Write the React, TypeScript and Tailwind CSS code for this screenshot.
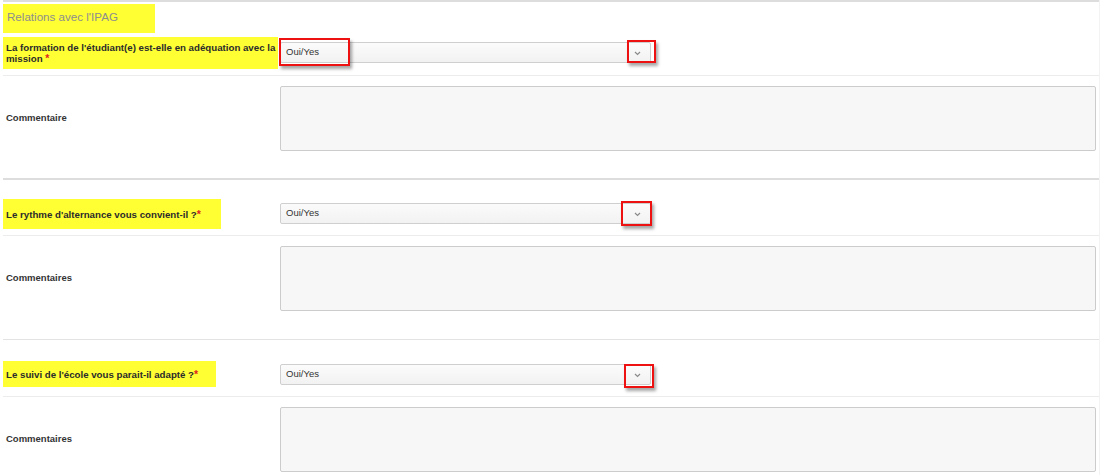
import React from 'react';

const font = { fontFamily: '"Liberation Sans", Arial, sans-serif' };

const RedBox = ({ className }: { className: string }) => (
  <div
    className={`absolute border-2 border-[#ee1111] shadow-[2px_3px_3px_rgba(0,0,0,0.35)] ${className}`}
  />
);

interface SelectProps {
  marks?: 'both' | 'chevron';
  chevronBox: string;
}

const FakeSelect = ({ marks = 'chevron', chevronBox }: SelectProps) => (
  <div className="relative w-[371px] h-[21px] border border-[#cfcfcf] rounded-[2px] bg-gradient-to-b from-[#fbfbfb] to-[#f2f2f2] flex items-center">
    <span className="pl-[5px] text-[9.5px] text-[#333]">Oui/Yes</span>
    <svg
      className="absolute right-[9px] top-[8px]"
      width="7"
      height="5"
      viewBox="0 0 7 5"
      fill="none"
    >
      <path d="M1 1l2.5 2.5L6 1" stroke="#8a8a8a" strokeWidth="1.2" />
    </svg>
    {marks === 'both' && <RedBox className="left-[-2px] top-[-5px] w-[71px] h-[28px]" />}
    <RedBox className={chevronBox} />
  </div>
);

const Question = ({
  children,
  boxClass,
}: {
  children: React.ReactNode;
  boxClass: string;
}) => (
  <div
    className={`bg-[#ffff33] text-[9.7px] font-bold text-[#2b2b2b] leading-[11px] pl-[3px] flex items-center ${boxClass}`}
  >
    <div>{children}</div>
  </div>
);

const Star = () => <span className="text-[#e02020] text-[10.5px]">*</span>;

const CommentRow = ({ label, h }: { label: string; h: string }) => (
  <div className="flex items-center mt-[10px]">
    <div className="w-[277px] pl-[3px] text-[9.5px] font-bold text-[#333]">{label}</div>
    <div className={`w-[816px] ${h} border border-[#cccccc] rounded-[2px] bg-[#f7f7f7]`} />
  </div>
);

export default function App() {
  return (
    <div className="bg-white w-[1110px] h-[475px] overflow-hidden" style={font}>
      <div className="ml-[3px] w-[1097px] border-r border-[#f3f3f3] h-full">
        <div className="h-[2px] bg-[#dddddd]" />

        {/* titre de section */}
        <div className="mt-[2px] w-[152px] h-[29px] bg-[#ffff33] pl-[4px] pt-[4px] text-[11.6px] text-[#8e8e8e]">
          Relations avec l'IPAG
        </div>

        {/* Q1 */}
        <div className="flex items-start mt-[4px]">
          <Question boxClass="w-[275px] h-[32px]">
            La formation de l'étudiant(e) est-elle en adéquation avec la
            <br />
            mission <Star />
          </Question>
          <div className="ml-[2px] mt-[5px]">
            <FakeSelect
              marks="both"
              chevronBox="left-[346px] top-[-3px] w-[29px] h-[23px]"
            />
          </div>
        </div>
        <div className="mt-[6px] h-px bg-[#ececec]" />
        <CommentRow label="Commentaire" h="h-[65px]" />
        <div className="mt-[27px] h-[2px] bg-[#dddddd]" />

        {/* Q2 */}
        <div className="flex items-start mt-[19px]">
          <Question boxClass="w-[218px] h-[30px]">
            Le rythme d'alternance vous convient-il ?<Star />
          </Question>
          <div className="ml-[59px] mt-[4px]">
            <FakeSelect chevronBox="left-[340px] top-[-3px] w-[31px] h-[25px]" />
          </div>
        </div>
        <div className="mt-[6px] h-px bg-[#ececec]" />
        <CommentRow label="Commentaires" h="h-[65px]" />
        <div className="mt-[28px] h-px bg-[#e3e3e3]" />

        {/* Q3 */}
        <div className="flex items-start mt-[21px]">
          <Question boxClass="w-[213px] h-[26px]">
            Le suivi de l'école vous parait-il adapté ?<Star />
          </Question>
          <div className="ml-[64px] mt-[3px]">
            <FakeSelect chevronBox="left-[343px] top-[-1px] w-[30px] h-[24px]" />
          </div>
        </div>
        <div className="mt-[9px] h-px bg-[#ececec]" />
        <CommentRow label="Commentaires" h="h-[65px]" />
      </div>
    </div>
  );
}
